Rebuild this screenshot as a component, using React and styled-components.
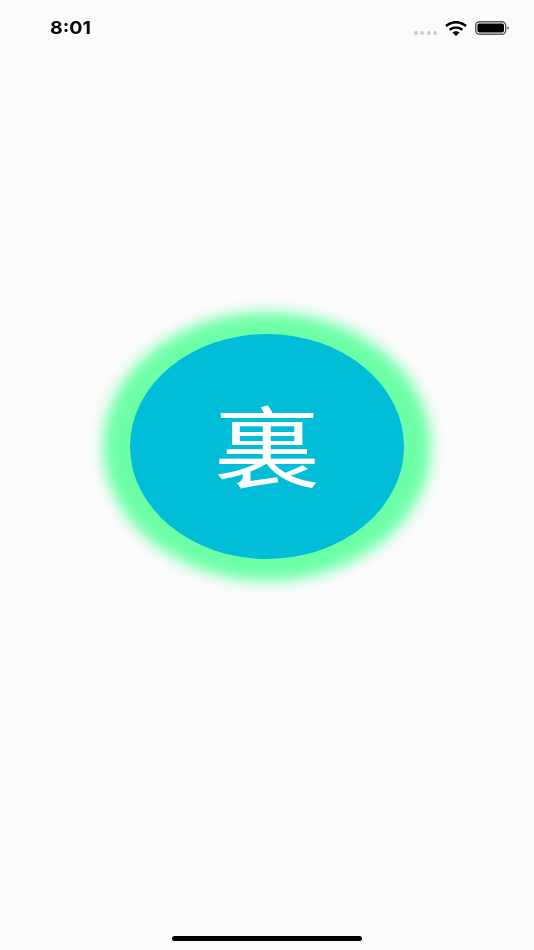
import React from "react";
import styled, { createGlobalStyle } from "styled-components";

const Global = createGlobalStyle`
  html, body { margin: 0; padding: 0; background: #fbfbfb; }
  #root { width: 534px; height: 950px; overflow: hidden; }
`;

const Screen = styled.div`
  width: 534px;
  height: 950px;
  display: flex;
  flex-direction: column;
  background: #fbfbfb;
  font-family: "Inter", "Liberation Sans", "Noto Sans CJK SC", sans-serif;
`;

const StatusBar = styled.header`
  height: 56px;
  flex: none;
  box-sizing: border-box;
  padding: 0 25px 0 50px;
  display: flex;
  align-items: center;
  justify-content: space-between;
`;

const Time = styled.span`
  display: block;
  width: 42px;
  font-size: 18px;
  line-height: 18px;
  font-weight: 700;
  color: #0a0a0a;
  white-space: nowrap;
  transform: scaleX(1.09);
  transform-origin: left center;
`;

const StatusIcons = styled.div`
  display: flex;
  align-items: center;
  gap: 8px;
`;

const SignalDots = styled.div`
  display: flex;
  gap: 2.33px;
  margin-top: 9px;
`;

const Dot = styled.i`
  display: block;
  width: 4px;
  height: 4px;
  border-radius: 50%;
  background: #cdcdcd;
`;

const Stage = styled.main`
  flex: 1;
  display: flex;
  align-items: flex-start;
  justify-content: center;
  padding-top: 278px;
`;

const Orb = styled.div`
  position: relative;
  isolation: isolate;
  width: 274px;
  height: 225px;
  border-radius: 50%;
  display: flex;
  align-items: center;
  justify-content: center;

  &::before {
    content: "";
    position: absolute;
    inset: -22px -27px;
    z-index: -2;
    border-radius: 50%;
    background: #6dffa8;
    filter: blur(7px);
  }

  &::after {
    content: "";
    position: absolute;
    inset: 0;
    z-index: -1;
    border-radius: 50%;
    background: #02bdd8;
  }
`;

const Glyph = styled.span`
  color: #fff;
  font-family: "Noto Sans CJK SC", "Noto Sans CJK JP", sans-serif;
  font-size: 88px;
  line-height: 88px;
  font-weight: 400;
  transform: translateY(-5.5px) scaleX(1.21);
`;

const HomeArea = styled.footer`
  flex: none;
  height: 391px;
  display: flex;
  align-items: flex-end;
  justify-content: center;
  padding-bottom: 9px;
  box-sizing: border-box;
`;

const HomeBar = styled.div`
  width: 190px;
  height: 5px;
  border-radius: 3px;
  background: #000;
`;

const Wifi = () => (
  <svg width="22" height="15" viewBox="0 0 22 15" fill="none" aria-hidden="true">
    <path d="M1 5C6.8-.1 15.2-.1 21 5" stroke="#000" strokeWidth="2.5" />
    <path d="M4.6 8.7C8.2 5.6 13.8 5.6 17.4 8.7" stroke="#000" strokeWidth="2.5" />
    <path d="M7.4 11.5L11 15l3.6-3.5c-2.1-1.6-5.1-1.6-7.2 0Z" fill="#000" />
  </svg>
);

const Battery = () => (
  <svg width="34" height="14" viewBox="0 0 34 14" fill="none" aria-hidden="true">
    <rect x="0.7" y="0.7" width="30" height="12.6" rx="3.8" stroke="#5a5a5a" strokeWidth="1.4" />
    <rect x="2.4" y="2.4" width="26.6" height="9.2" rx="2" fill="#000" />
    <path d="M32.4 5.2c.9.3 1.4 1 1.4 1.8s-.5 1.5-1.4 1.8Z" fill="#5a5a5a" />
  </svg>
);

export default function App() {
  return (
    <>
      <Global />
      <Screen>
        <StatusBar>
          <Time>8:01</Time>
          <StatusIcons>
            <SignalDots>
              <Dot /><Dot /><Dot /><Dot />
            </SignalDots>
            <Wifi />
            <Battery />
          </StatusIcons>
        </StatusBar>
        <Stage>
          <Orb>
            <Glyph>裏</Glyph>
          </Orb>
        </Stage>
        <HomeArea>
          <HomeBar />
        </HomeArea>
      </Screen>
    </>
  );
}
